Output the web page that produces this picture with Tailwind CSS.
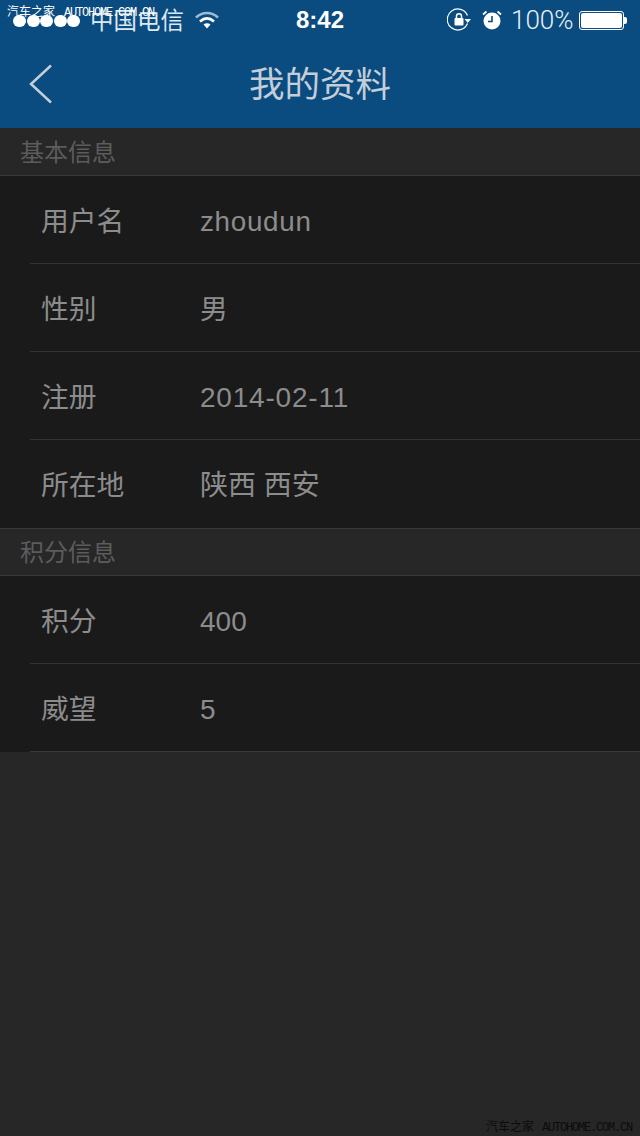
<!doctype html>
<html lang="zh-CN">
<head>
<meta charset="utf-8">
<script src="https://cdn.jsdelivr.net/npm/@tailwindcss/browser@4"></script>
</head>
<body class="m-0">
<div class="relative w-[640px] h-[1136px] overflow-hidden bg-[#272727] font-['Liberation_Sans','Noto_Sans_CJK_SC',sans-serif]">
  <header class="h-[128px] bg-[#0b4c80] flex flex-col">
    <div class="h-[40px] flex items-center relative pl-[13px] pr-[11px] text-white">
      <div class="flex gap-[0.5px] w-[67px] mt-[1px]">
        <i class="w-[13px] h-[12px] rounded-full bg-white"></i><i class="w-[13px] h-[12px] rounded-full bg-white"></i><i class="w-[13px] h-[12px] rounded-full bg-white"></i><i class="w-[13px] h-[12px] rounded-full bg-white"></i><i class="w-[13px] h-[12px] rounded-full bg-white"></i>
      </div>
      <span class="ml-[10px] text-[23.500px] leading-[40px] pt-[1px] text-[#dce8f2]">中国电信</span>
      <svg class="ml-[10px] mt-[-1px]" width="26" height="20" viewBox="0 0 26 20" fill="none" stroke-linecap="butt">
        <path d="M2 7.500C8.500 1.500 17.500 1.500 24 7.500" stroke="#9dbbd3" stroke-width="2.600"/>
        <path d="M6 11.500C10.500 7.500 15.500 7.500 20 11.500" stroke="#ffffff" stroke-width="2.600"/>
        <path d="M9.500 14.500L13 18.500L16.500 14.500C14.500 12.800 11.500 12.800 9.500 14.500Z" fill="#ffffff"/>
      </svg>
      <span class="absolute left-[296px] top-0 text-[24px] leading-[40px] font-bold">8:42</span>
      <div class="ml-auto flex items-center">
        <svg width="25" height="24" viewBox="0 0 25 24" fill="none">
          <path d="M20.500 15.500A10.500 10.500 0 1 1 20.500 7.500" stroke="#ffffff" stroke-width="1.200"/>
          <path d="M17.500 11H24L20.700 15Z" fill="#ffffff"/>
          <rect x="7.500" y="10" width="9" height="7.500" rx="1" fill="#ffffff"/>
          <path d="M9.500 10V8.200a2.500 2.500 0 0 1 5 0V10" stroke="#ffffff" stroke-width="1.500"/>
        </svg>
        <svg class="ml-[10px]" width="20" height="20" viewBox="0 0 20 20" fill="none">
          <circle cx="10" cy="11" r="8.500" fill="#ffffff"/>
          <path d="M10 6V11.500H6" stroke="#0b4c80" stroke-width="1.600"/>
          <path d="M1 4.500L4.500 1.500M19 4.500L15.500 1.500" stroke="#ffffff" stroke-width="1.800"/>
        </svg>
        <span class="ml-[9px] text-[26px] leading-[40px] text-[#e8f0f6] font-['Roboto',sans-serif] font-light w-[60px] whitespace-nowrap">100%</span>
        <div class="ml-[8px] w-[45px] h-[19px] rounded-[3px] border border-white p-[1px] mt-[1px]"><div class="w-full h-full bg-white rounded-[2px]"></div></div>
        <div class="w-[3px] h-[7px] bg-white rounded-r-[2px] mt-[1px] mr-[2px]"></div>
      </div>
    </div>
    <div class="relative flex-1 flex items-center justify-center">
      <svg class="absolute left-[28px] top-[24px]" width="26" height="40" viewBox="0 0 26 40" fill="none">
        <path d="M23 1.500L3 20L23 38.500" stroke="#c3ced8" stroke-width="2.500"/>
      </svg>
      <h1 class="text-[35.500px] leading-[44px] font-normal text-[#c3ced8] mt-[2px]">我的资料</h1>
    </div>
  </header>

  <section>
    <h2 class="h-[48px] pl-[20px] pt-[2px] flex items-center text-[24px] font-normal text-[#5c5c5c] border-b border-[#3a3a3a]">基本信息</h2>
    <div class="bg-[#1a1a1a]">
      <div class="ml-[30px] h-[88px] pt-[4px] flex items-center border-b border-[#333333] text-[27.800px] text-[#8c8c8c]"><span class="w-[170px] pl-[11px]">用户名</span><span class="tracking-[0.7px]">zhoudun</span></div>
      <div class="ml-[30px] h-[88px] pt-[4px] flex items-center border-b border-[#333333] text-[27.800px] text-[#8c8c8c]"><span class="w-[170px] pl-[11px]">性别</span><span>男</span></div>
      <div class="ml-[30px] h-[88px] pt-[4px] flex items-center border-b border-[#333333] text-[27.800px] text-[#8c8c8c]"><span class="w-[170px] pl-[11px]">注册</span><span class="text-[28px] tracking-[0.8px]">2014-02-11</span></div>
      <div class="ml-[30px] h-[88px] pt-[4px] flex items-center text-[27.800px] text-[#8c8c8c]"><span class="w-[170px] pl-[11px]">所在地</span><span class="text-[28px]">陕西 西安</span></div>
    </div>
  </section>

  <section>
    <h2 class="h-[48px] pl-[20px] pt-[1px] flex items-center text-[24px] font-normal text-[#5c5c5c] border-y border-[#3a3a3a]">积分信息</h2>
    <div class="bg-[#1a1a1a]">
      <div class="ml-[30px] h-[88px] pt-[4px] flex items-center border-b border-[#333333] text-[27.800px] text-[#8c8c8c]"><span class="w-[170px] pl-[11px]">积分</span><span class="text-[28px]">400</span></div>
      <div class="ml-[30px] h-[88px] pt-[4px] flex items-center border-b border-[#3a3a3a] text-[27.800px] text-[#8c8c8c]"><span class="w-[170px] pl-[11px]">威望</span><span class="text-[28px]">5</span></div>
    </div>
  </section>

  <span class="absolute left-[7px] top-[3px] text-[12px] leading-[16px] tracking-[-1.200px] text-white font-['Liberation_Mono',monospace] whitespace-nowrap"><span class="tracking-normal font-['Noto_Sans_CJK_SC',sans-serif]">汽车之家</span><span class="ml-[9px]">AUTOHOME.COM.CN</span></span>
  <span class="absolute right-[8px] bottom-0 text-[12px] leading-[16px] tracking-[-1.200px] text-[#0c0c0c] font-['Liberation_Mono',monospace] whitespace-nowrap"><span class="tracking-normal font-['Noto_Sans_CJK_SC',sans-serif]">汽车之家</span><span class="ml-[8px]">AUTOHOME.COM.CN</span></span>
</div>
</body>
</html>
